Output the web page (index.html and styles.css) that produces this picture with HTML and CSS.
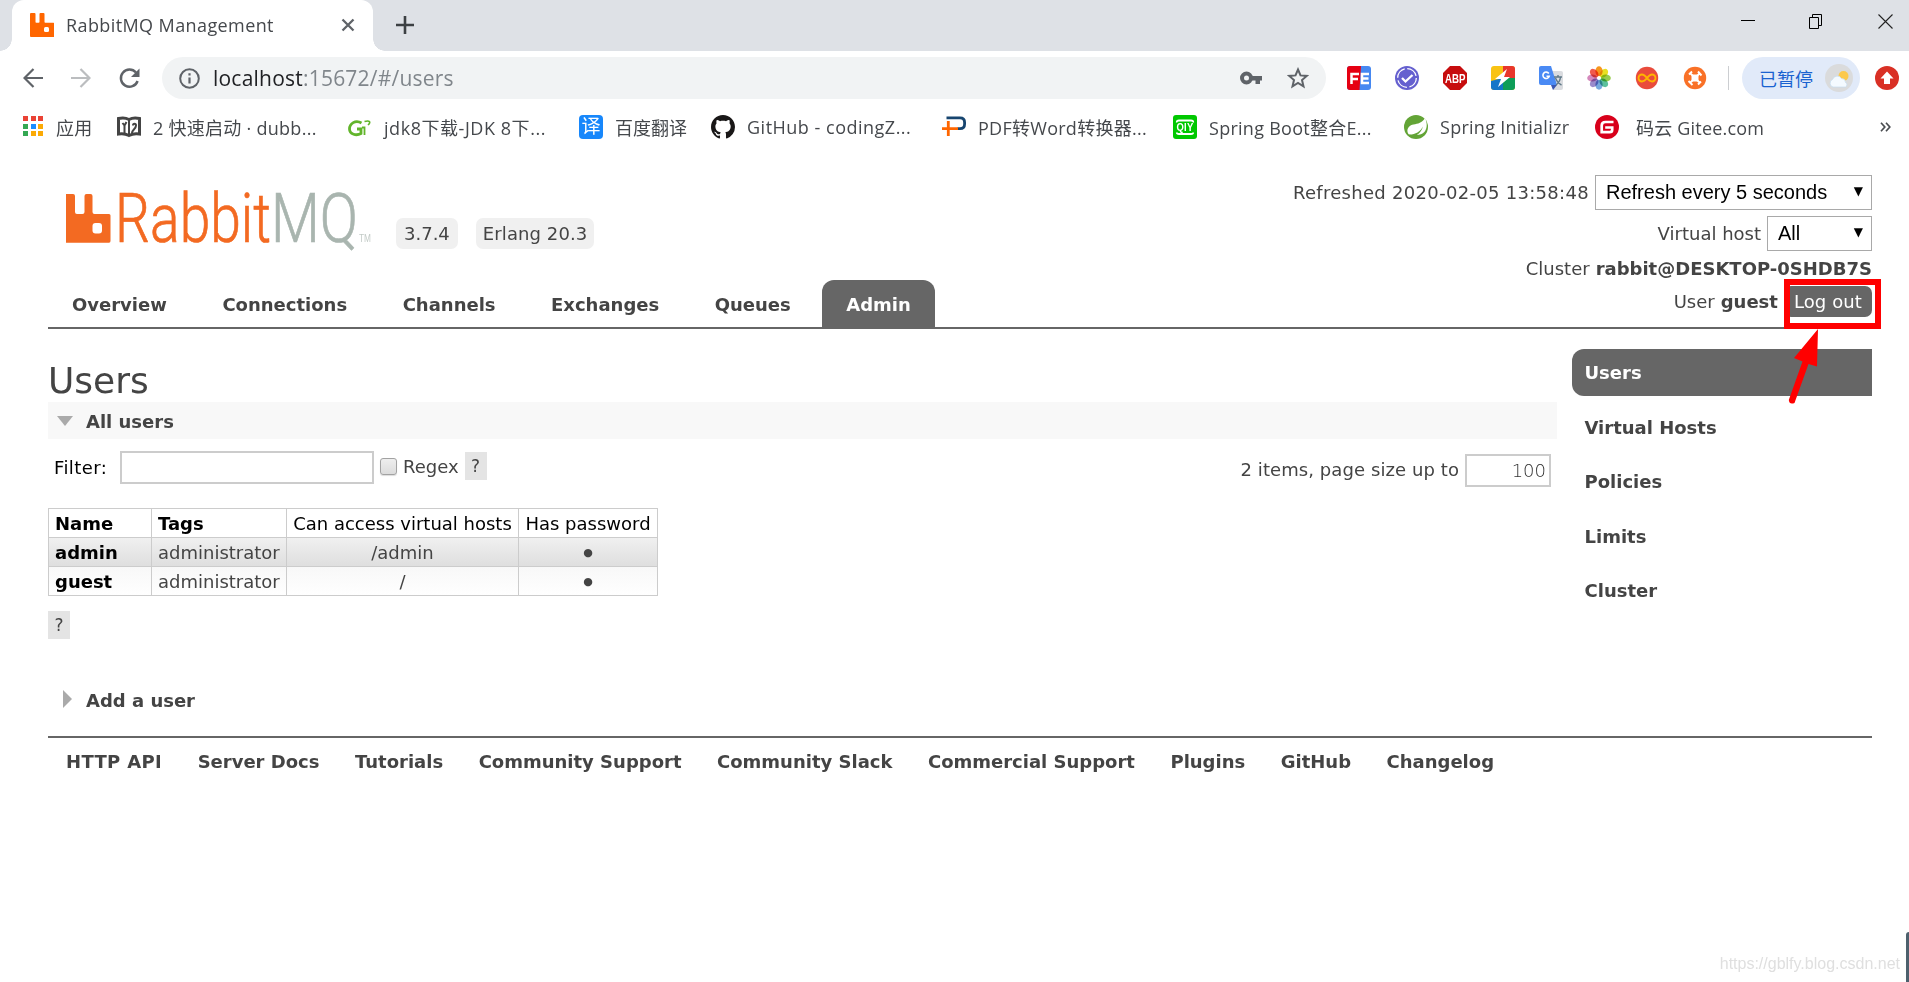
FILE: index.html
```html
<!DOCTYPE html>
<html lang="zh-CN">

<head>
  <meta charset="UTF-8">
  <title>RabbitMQ Management</title>
  <link rel="stylesheet" href="styles.css">
</head>

<body>
  <div class="browser">
    <div class="tab-strip">
      <div class="tab">
        <svg class="favicon" width="24" height="24" viewBox="0 0 24 24">
          <path fill="#ff6600" d="M1 0h3.500q1 0 1 1v8q0 .8.800.8h2.400q.8 0 .8-.8V1q0-1 1-1h3q1 0 1 1v8q0 .8.800.8h8.200q1 0 1 1V23q0 1-1 1H1q-1 0-1-1V1q0-1 1-1z" />
          <rect x="14" y="14" width="5" height="5" rx="1.500" fill="#fff" />
        </svg>
        <span class="tab-title">RabbitMQ Management</span>
        <svg width="14" height="14" viewBox="0 0 14 14" stroke="#5f6368" stroke-width="2.300">
          <path d="M1.500 1.500l11 11M12.500 1.500l-11 11" />
        </svg>
      </div>
      <svg class="new-tab" width="18" height="18" viewBox="0 0 18 18" stroke="#3c4043" stroke-width="2.600">
        <path d="M9 0v18M0 9h18" />
      </svg>
      <div class="window-buttons">
        <svg width="16" height="16" viewBox="0 0 16 16" stroke="#000">
          <path d="M3 6.500h12" />
          <path d="M1 6.500h13" />
        </svg>
        <svg width="16" height="16" viewBox="0 0 16 16" fill="none" stroke="#000">
          <path d="M.5 3.500h9v11h-9zM3.500 3.500v-3h9v11h-3" />
        </svg>
        <svg width="16" height="16" viewBox="0 0 16 16" stroke="#222" stroke-width="1.100">
          <path d="M.5 .5l14 14M14.500 .5l-14 14" />
        </svg>
      </div>
    </div>

    <div class="toolbar">
      <svg class="nav-icon" width="20" height="20" viewBox="0 0 20 20" fill="none" stroke="#5f6368" stroke-width="2.200">
        <path d="M20 10H2M10.500 1L1.500 10l9 9" />
      </svg>
      <svg class="nav-icon" width="20" height="20" viewBox="0 0 20 20" fill="none" stroke="#bbbdbf" stroke-width="2.200">
        <path d="M0 10h18M9.500 1l9 9-9 9" />
      </svg>
      <svg class="nav-icon" width="21" height="21" viewBox="0 0 21 21" fill="none" stroke="#5f6368" stroke-width="2.400">
        <path d="M17 4.500A8.600 8.600 0 1 0 18.600 13" />
        <path d="M20.500 .5v8.500h-8.500z" fill="#5f6368" stroke="none" />
      </svg>
      <div class="omnibox">
        <svg width="21" height="21" viewBox="0 0 21 21" fill="none" stroke="#5f6368" stroke-width="2">
          <circle cx="10.500" cy="10.500" r="9.300" />
          <path d="M10.500 9.500v6M10.500 5.300v2.300" stroke-width="2.200" />
        </svg>
        <span class="url"><b>localhost</b>:15672/#/users</span>
        <svg class="key" width="22" height="14" viewBox="0 0 22 14">
          <circle cx="6.500" cy="7" r="4.500" fill="none" stroke="#5f6368" stroke-width="4" />
          <path fill="#5f6368" d="M11 5h11v4.500h-2V13h-4.500V9.500H11z" />
        </svg>
        <svg width="22" height="22" viewBox="0 0 22 22" fill="none" stroke="#5f6368" stroke-width="2">
          <path d="M11 2.500l2.500 5.900 6.300.5-4.800 4.200 1.500 6.200L11 16l-5.500 3.300L7 13.100 2.200 8.900l6.300-.5z" />
        </svg>
      </div>
      <div class="extensions">
        <svg width="24" height="24" viewBox="0 0 24 24">
          <rect width="24" height="24" rx="3" fill="#4688f1" />
          <path d="M3 0h11l-1.500 24H3q-3 0-3-3V3q0-3 3-3z" fill="#e60012" />
          <path d="M4.500 18V8H12M4.500 13H11M22 8h-7v9h7M15 12.500h6.500" fill="none" stroke="#fff" stroke-width="2.500" />
        </svg>
        <svg width="24" height="24" viewBox="0 0 24 24" fill="none">
          <circle cx="12" cy="12" r="12" fill="#6560cf" />
          <circle cx="12" cy="12" r="9.300" stroke="#fff" stroke-width="1.300" stroke-dasharray="12 2.600" />
          <path d="M7 12l3.500 3.500L17.500 9" stroke="#fff" stroke-width="2.300" />
        </svg>
        <svg width="24" height="24" viewBox="0 0 24 24">
          <path fill="#c70d0e" d="M7 0h10l7 7v10l-7 7H7l-7-7V7z" />
          <text x="2" y="17" textLength="20.500" lengthAdjust="spacingAndGlyphs" class="abp">ABP</text>
        </svg>
        <svg width="24" height="24" viewBox="0 0 24 24">
          <rect width="24" height="24" rx="3" fill="#f9c313" />
          <path d="M12 0h9q3 0 3 3v9H12z" fill="#e8362c" />
          <path d="M24 12v9q0 3-3 3h-9V12z" fill="#0e9d58" />
          <path d="M12 24H3q-3 0-3-3v-6l12-3z" fill="#1576c8" />
          <path d="M16 3L4 13h6L7 21l12-10h-6z" fill="#fff" />
        </svg>
        <svg width="24" height="24" viewBox="0 0 24 24">
          <path d="M10 5h12q2 0 2 2v15q0 2-2 2H14z" fill="#dadce0" />
          <path d="M2 0h10l6 19H2q-2 0-2-2V2q0-2 2-2z" fill="#4a8af4" />
          <path d="M12 19h6l-4 5z" fill="#3a56b0" />
          <path d="M9.800 7.500a3.200 3.200 0 1 0 .4 2.700H7.500" fill="none" stroke="#fff" stroke-width="1.600" />
          <path d="M15 11h8M19 9v2M17 19q4-3 4.500-8M16.500 12q2 5 6 7" fill="none" stroke="#607988" stroke-width="1.400" />
        </svg>
        <svg class="photos" width="24" height="24" viewBox="-12 -12 24 24">
          <ellipse cy="-6.800" rx="3.600" ry="5" fill="#f7961e" />
          <ellipse cy="-6.800" rx="3.600" ry="5" fill="#e8e022" transform="rotate(45)" />
          <ellipse cy="-6.800" rx="3.600" ry="5" fill="#97cc4c" transform="rotate(90)" />
          <ellipse cy="-6.800" rx="3.600" ry="5" fill="#5cc09d" transform="rotate(135)" />
          <ellipse cy="-6.800" rx="3.600" ry="5" fill="#77a9de" transform="rotate(180)" />
          <ellipse cy="-6.800" rx="3.600" ry="5" fill="#9a8bcb" transform="rotate(225)" />
          <ellipse cy="-6.800" rx="3.600" ry="5" fill="#d488bc" transform="rotate(270)" />
          <ellipse cy="-6.800" rx="3.600" ry="5" fill="#f0594d" transform="rotate(315)" />
        </svg>
        <svg width="24" height="24" viewBox="0 0 24 24">
          <circle cx="12" cy="12" r="11.200" fill="#e94b3c" />
          <path d="M12 12c-2-2.500-3.300-3.500-5-3.500a3.500 3.500 0 0 0 0 7c1.700 0 3-1 5-3.500s3.300-3.500 5-3.500a3.500 3.500 0 0 1 0 7c-1.700 0-3-1-5-3.500z" fill="none" stroke="#ffb400" stroke-width="1.900" />
        </svg>
        <svg width="24" height="24" viewBox="0 0 24 24">
          <circle cx="12" cy="12" r="11.200" fill="#f97127" />
          <rect x="8.500" y="8.500" width="7" height="7" rx="1.500" fill="#fff" />
          <path d="M6 8.500l3-3M15 5.500l3.500 4M5.500 15l4 4M15 18.500l3-3M7.500 7.500l9 9M16.500 7.500l-9 9" stroke="#fff" stroke-width="1.900" fill="none" />
        </svg>
      </div>
      <div class="profile">
        <span>已暂停</span>
        <svg width="28" height="28" viewBox="0 0 28 28">
          <circle cx="14" cy="14" r="14" fill="#dadbdc" />
          <circle cx="18.500" cy="12" r="5" fill="#fcc94d" />
          <path d="M8 23a4 4 0 0 1-.5-7.500 5 5 0 0 1 9-1 4 4 0 0 1 4 4 2.500 2.500 0 0 1 0 4.500z" fill="#f4faff" stroke="#c5dcf0" stroke-width=".7" />
        </svg>
      </div>
      <svg class="update" width="24" height="24" viewBox="0 0 24 24">
        <circle cx="12" cy="12" r="12" fill="#d93025" />
        <path d="M12 5.500l6.500 7H15V18H9v-5.500H5.500z" fill="#fff" />
      </svg>
    </div>

    <div class="bookmarks">
      <a class="bookmark apps">
        <svg width="21" height="21" viewBox="0 0 21 21">
          <path fill="#ea4335" d="M0 0h5v5H0zM8 0h5v5H8zM15 0h5v5h-5z" />
          <path fill="#34a853" d="M0 8h5v5H0zM0 15h5v5H0z" />
          <path fill="#1a8cff" d="M8 8h5v5H8z" />
          <path fill="#fbaa05" d="M15 8h5v5h-5zM8 15h5v5H8zM15 15h5v5h-5z" />
        </svg>
        <span>应用</span>
      </a>
      <a class="bookmark dubbo">
        <svg width="24" height="24" viewBox="0 0 24 24">
          <path d="M1.500 3.500q6-1.500 10.500 1 4.500-2.500 10.500-1v15.500q-6-1-10.500 1.500-4.500-2.500-10.500-1.500z" fill="#fff" stroke="#444" stroke-width="3" />
          <path d="M12 4v17M5.500 8l2 2.500V18M7.500 10.500L9.500 7M15 18c0-3 4-4 4-7.500 0-2.500-3-2.500-3 0" fill="none" stroke="#444" stroke-width="2" />
        </svg>
        <span>2 快速启动 · dubb...</span>
      </a>
      <a class="bookmark jdk">
        <svg width="24" height="24" viewBox="0 0 24 24" fill="none" stroke="#62b52b">
          <path d="M13.500 8C7.500 4.500 1.500 8.500 1.500 14c0 5.500 7 7 11.500 4.500V14H9" stroke-width="2.800" />
          <path d="M14 12.500h2.500V20" stroke-width="1.800" />
          <path d="M16.500 6.500c5-1.500 7 .5 3.500 3.500" stroke-width="1.600" />
        </svg>
        <span>jdk8下载-JDK 8下...</span>
      </a>
      <a class="bookmark baidu">
        <i class="glyph-icon">译</i>
        <span>百度翻译</span>
      </a>
      <a class="bookmark github">
        <svg width="24" height="24" viewBox="0 0 16 16">
          <path fill="#191717" d="M8 0C3.580 0 0 3.580 0 8c0 3.540 2.290 6.530 5.470 7.590.4.070.55-.17.55-.38 0-.19-.01-.82-.01-1.490-2.010.37-2.530-.49-2.690-.94-.09-.23-.48-.94-.82-1.130-.28-.15-.68-.52-.01-.53.63-.01 1.080.58 1.230.82.72 1.210 1.870.87 2.330.66.070-.52.28-.87.51-1.070-1.780-.2-3.640-.89-3.640-3.950 0-.87.31-1.590.82-2.150-.08-.2-.36-1.020.08-2.120 0 0 .67-.21 2.200.82.64-.18 1.320-.27 2-.27s1.360.09 2 .27c1.530-1.040 2.200-.82 2.200-.82.44 1.100.16 1.920.08 2.120.51.56.82 1.270.82 2.150 0 3.070-1.870 3.750-3.650 3.950.29.25.54.73.54 1.480 0 1.070-.01 1.930-.01 2.200 0 .21.15.46.55.38A8.010 8.010 0 0 0 16 8c0-4.420-3.580-8-8-8z" />
        </svg>
        <span>GitHub - codingZ...</span>
      </a>
      <a class="bookmark pdf">
        <svg width="24" height="24" viewBox="0 0 24 24" fill="none" stroke="#17456f" stroke-width="2.800">
          <path d="M4.500 2.900H18q4.600 0 4.600 4.500v1.700q0 4.600-4.600 4.600h-2.500" />
          <path d="M0 13.600h16M6.300 6v15" stroke="#f60" />
        </svg>
        <span>PDF转Word转换器...</span>
      </a>
      <a class="bookmark qiyi">
        <svg width="24" height="24" viewBox="0 0 24 24">
          <rect width="24" height="24" rx="3" fill="#00c800" />
          <path d="M3.800 7.500Q3.500 5.500 6 5.500h12q2.500 0 2.200 2M3.800 17.500q0 1.500 2.200 1.500h12q2.200 0 2.200-1.500" fill="none" stroke="#fff" stroke-width="1.800" />
          <text x="3.500" y="16" textLength="17" lengthAdjust="spacingAndGlyphs" class="qiy">QIY</text>
        </svg>
        <span>Spring Boot整合E...</span>
      </a>
      <a class="bookmark spring">
        <svg width="24" height="24" viewBox="0 0 24 24">
          <circle cx="12" cy="12" r="12" fill="#63a436" />
          <path d="M21 3c3.500 7 1.500 15-5 16.500-3.500.8-8 .5-11 .3C1.500 16 4 10.500 9.500 9.500 14 8.700 18 8 21 3z" fill="#fff" />
          <path d="M4 19.500c7 .5 12-2.500 15-8-2 6.500-7 11-13.500 10.500z" fill="#63a436" />
        </svg>
        <span>Spring Initializr</span>
      </a>
      <a class="bookmark gitee">
        <svg width="24" height="24" viewBox="0 0 24 24">
          <circle cx="12" cy="12" r="12" fill="#d8001b" />
          <path d="M18.500 7h-8Q6.700 7 6.700 10.500v6.700h8q2.500 0 2.500-2.500v-2.200h-7" fill="none" stroke="#fff" stroke-width="2.700" />
        </svg>
        <span>码云 Gitee.com</span>
      </a>
      <svg class="more" width="11" height="10" viewBox="0 0 11 10" fill="none" stroke="#4a4d51" stroke-width="1.700">
        <path d="M1 .8L4.800 5 1 9.200M6 .8L9.800 5 6 9.200" />
      </svg>
    </div>
  </div>

  <div class="outer">
    <div class="header">
      <div class="brand">
        <svg class="logo" width="306" height="70" viewBox="0 0 306 70">
          <path fill="#f36a22" d="M2 4h5q2 0 2 2v16q0 2 2 2h5.500q2 0 2-2V6q0-2 2-2h4q2 0 2 2v16q0 2 2 2H43q1.500 0 1.500 1.500V51q0 1.700-1.500 1.700H0V4z" />
          <rect x="26.500" y="33" width="9.500" height="10.500" rx="3" fill="#fff" />
          <text x="49" y="51.500" textLength="156" lengthAdjust="spacingAndGlyphs" class="logo-rabbit">Rabbit</text>
          <text x="205" y="51.500" textLength="87" lengthAdjust="spacingAndGlyphs" class="logo-mq">MQ</text>
          <text x="293" y="51.500" textLength="12" lengthAdjust="spacingAndGlyphs" class="logo-tm">TM</text>
        </svg>
        <span class="version">3.7.4</span>
        <span class="version erlang">Erlang 20.3</span>
      </div>
      <ul class="status">
        <li class="row-select refreshed">Refreshed 2020-02-05 13:58:48
          <span class="select refresh">Refresh every 5 seconds <i>▼</i></span>
        </li>
        <li class="row-select">Virtual host
          <span class="select vhost">All <i>▼</i></span>
        </li>
        <li class="row-cluster">Cluster <b>rabbit@DESKTOP-0SHDB7S</b></li>
        <li class="row-user">User <b>guest</b> <span class="logout">Log out</span></li>
      </ul>
    </div>

    <ul class="tabs">
      <li><a>Overview</a></li>
      <li><a>Connections</a></li>
      <li><a>Channels</a></li>
      <li><a>Exchanges</a></li>
      <li><a>Queues</a></li>
      <li><a class="selected">Admin</a></li>
    </ul>

    <div class="content">
      <div class="main">
        <h1>Users</h1>
        <h2 class="section-title open">All users</h2>
        <div class="filter">
          <span class="filter-label">Filter:</span>
          <input type="text" class="filter-input">
          <span class="checkbox"></span>
          <span class="regex">Regex</span>
          <span class="help">?</span>
          <div class="paging">2 items, page size up to <input type="text" value="100"></div>
        </div>
        <table class="list">
          <tr>
            <th class="left">Name</th>
            <th class="left">Tags</th>
            <th>Can access virtual hosts</th>
            <th>Has password</th>
          </tr>
          <tr class="alt1">
            <td class="left"><b>admin</b></td>
            <td class="left">administrator</td>
            <td>/admin</td>
            <td>●</td>
          </tr>
          <tr class="alt2">
            <td class="left"><b>guest</b></td>
            <td class="left">administrator</td>
            <td>/</td>
            <td>●</td>
          </tr>
        </table>
        <span class="help">?</span>
        <h2 class="section-title closed">Add a user</h2>
      </div>

      <ul class="side-menu">
        <li><a class="selected">Users</a></li>
        <li><a>Virtual Hosts</a></li>
        <li><a>Policies</a></li>
        <li><a>Limits</a></li>
        <li><a>Cluster</a></li>
      </ul>
    </div>

    <ul class="footer">
      <li class="api">HTTP API</li>
      <li>Server Docs</li>
      <li>Tutorials</li>
      <li>Community Support</li>
      <li>Community Slack</li>
      <li>Commercial Support</li>
      <li>Plugins</li>
      <li>GitHub</li>
      <li>Changelog</li>
    </ul>
  </div>

  <!-- marker around the logout button -->
  <div class="marker"></div>
  <svg class="arrow" width="40" height="80" viewBox="0 0 40 80">
    <path d="M31 0L7 29l8.500 3.500L1.800 71q.5 5 5.700 3L21.500 35l8.500 2.500z" fill="#f00" />
  </svg>
  <div class="watermark">https://gblfy.blog.csdn.net</div>
  <div class="edge"></div>
</body>

</html>
```

FILE: styles.css
```css
* {
  margin: 0;
  padding: 0;
  box-sizing: border-box;
}

body {
  position: relative;
  height: 982px;
  overflow: hidden;
  background: #fff;
  color: #444;
  font-family: "DejaVu Sans", sans-serif;
  font-size: 18px;
}

ul {
  list-style: none;
}

svg {
  display: block;
  flex: none;
}

/* browser window */
.browser {
  font-family: "Open Sans", "Noto Sans CJK SC", sans-serif;
  height: 154px;
}

.tab-strip {
  display: flex;
  height: 51px;
  background: #dee1e6;
}

.tab {
  position: relative;
  display: flex;
  align-items: center;
  width: 361px;
  height: 51px;
  margin-left: 12px;
  padding: 0 18px 1px;
  background: #fff;
  border-radius: 12px 12px 0 0;
}

.tab::before,
.tab::after {
  content: '';
  position: absolute;
  bottom: 0;
  width: 12px;
  height: 12px;
}

.tab::before {
  left: -12px;
  background: radial-gradient(circle at 0 0, #dee1e6 11.5px, #fff 12px);
}

.tab::after {
  right: -12px;
  background: radial-gradient(circle at 100% 0, #dee1e6 11.5px, #fff 12px);
}

.tab-title {
  flex: 1;
  margin-left: 12px;
  font-size: 18px;
  letter-spacing: 0.4px;
  color: #45484c;
}

.new-tab {
  margin: 16px 0 0 23px;
}

.window-buttons {
  display: flex;
  gap: 53px;
  margin: 14px 15px 0 auto;
}

.toolbar {
  display: flex;
  align-items: center;
  height: 54px;
  padding-left: 23px;
}

.nav-icon {
  margin-right: 28px;
}

.omnibox {
  display: flex;
  align-items: center;
  width: 1164px;
  height: 42px;
  margin-left: -6px;
  padding: 0 17px 0 17px;
  border-radius: 21px;
  background: #f1f3f4;
}

.url {
  flex: 1;
  margin-left: 13px;
  font-size: 21px;
  letter-spacing: 0.22px;
  color: #80868b;
}

.url b {
  font-weight: normal;
  color: #202124;
}

.key {
  margin-right: 25px;
}

.extensions {
  display: flex;
  gap: 24px;
  margin-left: 21px;
  padding-right: 21px;
  border-right: 1px solid #ccced1;
}

.photos ellipse {
  mix-blend-mode: multiply;
}

.abp {
  font: bold 12px "Liberation Sans", sans-serif;
  fill: #fff;
}

.qiy {
  font: bold 10px "Liberation Sans", sans-serif;
  fill: #fff;
}

.profile {
  display: flex;
  align-items: center;
  justify-content: space-between;
  width: 118px;
  height: 42px;
  margin-left: 13px;
  padding: 0 7px 0 17px;
  border-radius: 21px;
  background: #e1eaf9;
  color: #1a62d0;
  font-size: 18px;
}

.update {
  margin-left: 15px;
}

.bookmarks {
  display: flex;
  align-items: center;
  height: 43px;
  padding-left: 23px;
}

.bookmark {
  display: flex;
  align-items: center;
  gap: 12px;
  white-space: nowrap;
  font-size: 18px;
  letter-spacing: 0.27px;
  color: #45484c;
}

.apps { width: 94px; }
.dubbo { width: 231px; }
.jdk { width: 231px; letter-spacing: 0.55px; }
.baidu { width: 132px; letter-spacing: 0; }
.github { width: 231px; letter-spacing: 0.5px; }
.pdf { width: 231px; }
.qiyi { width: 231px; }
.spring { width: 191px; }
.gitee { width: 285px; gap: 17px; letter-spacing: 0.2px; }

.glyph-icon {
  width: 24px;
  height: 24px;
  border-radius: 4px;
  background: #1787fb;
  color: #fff;
  font-size: 19px;
  font-style: normal;
  line-height: 23px;
  text-align: center;
}

/* management page */
.outer {
  padding: 0 37px 0 48px;
}

.header {
  display: flex;
  justify-content: space-between;
  height: 126px;
}

.brand {
  display: flex;
  align-items: flex-start;
  padding: 36px 0 0 18px;
}

.logo {
  overflow: visible;
}

.logo-rabbit,
.logo-mq {
  font-family: Roboto, sans-serif;
  font-size: 68px;
  font-weight: 300;
  fill: #f36a22;
  stroke: #f36a22;
  stroke-width: 0.7px;
}

.logo-mq {
  fill: #a9b5af;
  stroke: #a9b5af;
}

.logo-tm {
  font: 11px "Liberation Sans", sans-serif;
  fill: #c3cbc7;
}

.version {
  margin: 28px 0 0 24px;
  padding: 0 8px;
  height: 31px;
  line-height: 31px;
  border-radius: 7px;
  background: #f0f0f0;
}

.erlang {
  margin-left: 18px;
  padding: 0 7px;
  letter-spacing: 0.1px;
}

.status {
  padding-top: 21px;
  white-space: nowrap;
}

.status li {
  display: flex;
  align-items: center;
  justify-content: flex-end;
  gap: 6px;
}

.row-select {
  height: 35px;
  margin-bottom: 6px;
  line-height: 37px;
}

.refreshed {
  letter-spacing: 0.3px;
}

.select {
  display: flex;
  align-items: center;
  justify-content: space-between;
  height: 35px;
  padding: 0 8px 0 10px;
  border: 1px solid #a9a9a9;
  color: #000;
  font-family: "Liberation Sans", sans-serif;
  font-size: 20px;
  letter-spacing: 0;
}

.select i {
  font-family: "DejaVu Sans", sans-serif;
  font-size: 12px;
  font-style: normal;
  margin-top: -3px;
}

.refresh { width: 277px; }
.vhost { width: 105px; }

.row-cluster {
  height: 32px;
  margin-top: -5px;
}

.row-user {
  height: 34px;
}

.logout {
  height: 31px;
  line-height: 31px;
  padding: 0 10px;
  border-radius: 7px;
  background: #666;
  color: #fff;
  letter-spacing: 0.1px;
}

.tabs {
  display: flex;
  gap: 7.5px;
  height: 49px;
  border-bottom: 2px solid #666;
}

.tabs a {
  display: block;
  height: 48px;
  padding: 0 24px;
  line-height: 50px;
  font-weight: bold;
  border-radius: 12px 12px 0 0;
}

.tabs .selected {
  background: #666;
  color: #fff;
}

.content {
  display: flex;
  justify-content: space-between;
  height: 407px;
}

.main {
  width: 1509px;
}

.main h1 {
  height: 73px;
  padding-top: 31px;
  font-size: 36px;
  font-weight: normal;
  line-height: 42px;
}

.section-title {
  display: flex;
  align-items: center;
  height: 37px;
  font-size: 18px;
  line-height: 21px;
}

.section-title::before {
  content: '';
  border: 8px solid transparent;
}

.open {
  padding-top: 1px;
  background: #f8f8f8;
}

.open::before {
  margin: 0 13px 0 9px;
  border-top: 10px solid #aaa;
  border-bottom: 0;
}

.closed {
  margin-top: 43px;
}

.closed::before {
  margin: -4px 14px 0 15px;
  border-width: 9px;
  border-left: 9px solid #aaa;
  border-right: 0;
}

.filter {
  display: flex;
  align-items: center;
  height: 69px;
  padding: 0 6px 12px;
}

.filter-label {
  width: 66px;
  color: #000;
  letter-spacing: 0.4px;
}

.main input {
  height: 33px;
  border: 2px solid #ccc;
  color: #333;
  font: 18px "DejaVu Sans", sans-serif;
}

.filter-input {
  width: 254px;
}

.checkbox {
  width: 17px;
  height: 17px;
  margin: -2px 6px 0 6px;
  border: 1px solid #a2a2a2;
  border-radius: 3px;
  background: linear-gradient(#eee, #dcdcdc);
  box-shadow: 0 1px 1px #ddd;
}

.help {
  display: block;
  width: 22px;
  height: 28px;
  line-height: 29px;
  text-align: center;
  font-size: 17px;
  background: #e4e4e4;
}

.regex {
  margin: -2px 6px 0 0;
}

.filter .help {
  margin-top: -3px;
}

.paging {
  display: flex;
  align-items: center;
  gap: 6px;
  margin: 5px 0 0 auto;
  line-height: 20px;
  letter-spacing: 0.08px;
}

.main .paging input {
  width: 86px;
  padding-right: 3px;
  text-align: right;
  font-weight: 200;
}

.list {
  border-collapse: collapse;
  table-layout: fixed;
  width: 610px;
  margin-bottom: 15px;
}

.list th,
.list td {
  height: 29px;
  padding-top: 1px;
  border: 1px solid #ccc;
  text-align: center;
  white-space: nowrap;
  line-height: 21px;
}

.list th {
  color: #000;
  font-weight: normal;
}

.list th:nth-child(1) { width: 103px; }
.list th:nth-child(2) { width: 135px; }
.list th:nth-child(3) { width: 232px; }
.list th:nth-child(4) { width: 139px; }

.list .left {
  padding-left: 6px;
  text-align: left;
}

.list th.left {
  font-weight: bold;
}

.list b {
  color: #000;
}

.list td:last-child {
  font-size: 11px;
}

.alt1 {
  background: linear-gradient(#f0f0f0, #dedede);
}

.alt2 {
  background: linear-gradient(#f8f8f8, #fff);
}

.side-menu {
  width: 300px;
  padding-top: 20px;
}

.side-menu a {
  display: block;
  height: 47px;
  margin-bottom: 7.600px;
  padding-left: 12.500px;
  line-height: 48px;
  font-weight: bold;
}

.side-menu .selected {
  border-radius: 12px 0 0 12px;
  background: #666;
  color: #fff;
}

.footer {
  display: flex;
  gap: 35.5px;
  padding: 13px 0 0 18px;
  border-top: 2px solid #666;
  font-weight: bold;
}

.api {
  letter-spacing: 0.35px;
}

.marker {
  position: absolute;
  left: 1784px;
  top: 279px;
  width: 97px;
  height: 50px;
  border: 6px solid #f00;
}

.arrow {
  position: absolute;
  left: 1787px;
  top: 329px;
}

.watermark {
  position: absolute;
  right: 9px;
  bottom: 9px;
  color: #dfdfdf;
  font: 16px "Liberation Sans", sans-serif;
}

.edge {
  position: absolute;
  right: 0;
  bottom: 0;
  width: 3px;
  height: 50px;
  border-radius: 3px 0 0 0;
  background: #4d606d;
}
```
